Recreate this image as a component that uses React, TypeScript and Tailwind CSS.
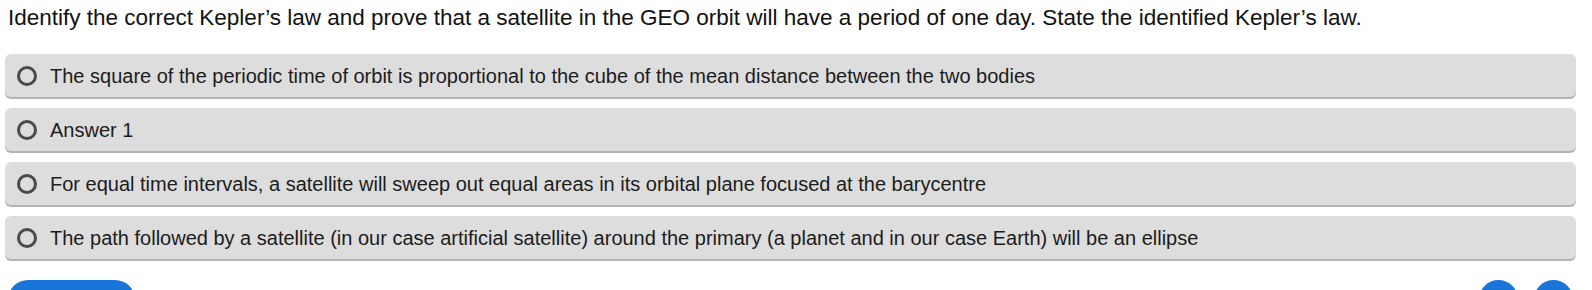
const options = [
  'The square of the periodic time of orbit is proportional to the cube of the mean distance between the two bodies',
  'Answer 1',
  'For equal time intervals, a satellite will sweep out equal areas in its orbital plane focused at the barycentre',
  'The path followed by a satellite (in our case artificial satellite) around the primary (a planet and in our case Earth) will be an ellipse',
];

export default function App() {
  return (
    <div className="h-[290px] overflow-hidden bg-white font-['Liberation_Sans',Arial,sans-serif] text-[#1a1a1a]">
      <div className="pl-[5px] pr-[16px] pt-[4px]">
        <h1 className="pl-[3px] text-[22.5px] leading-[27px] font-normal text-[#111]">
          Identify the correct Kepler’s law and prove that a satellite in the GEO orbit will have a period of one day. State the identified Kepler’s law.
        </h1>
        <div className="mt-[23px] flex flex-col gap-[11px]">
          {options.map((text) => (
            <label
              key={text}
              className="flex h-[43px] items-center gap-[13px] rounded-[6px] bg-[#dddddd] pl-[12px] shadow-[0_2px_0_#b3b3b3] cursor-pointer"
            >
              <span className="h-[20px] w-[20px] shrink-0 rounded-full border-[3px] border-[#4a4a4a]" />
              <span className="text-[20px] leading-[26px] text-[#1c1c1c]">{text}</span>
            </label>
          ))}
        </div>
        <div className="mt-[21px] flex items-start justify-between pl-[3px] pr-[3px]">
          <button className="h-[40px] w-[127px] rounded-full bg-[#1b74d9]" />
          <div className="flex gap-[16px]">
            <button className="h-[39px] w-[39px] rounded-full bg-[#1b74d9]" />
            <button className="h-[39px] w-[39px] rounded-full bg-[#1b74d9]" />
          </div>
        </div>
      </div>
    </div>
  );
}
